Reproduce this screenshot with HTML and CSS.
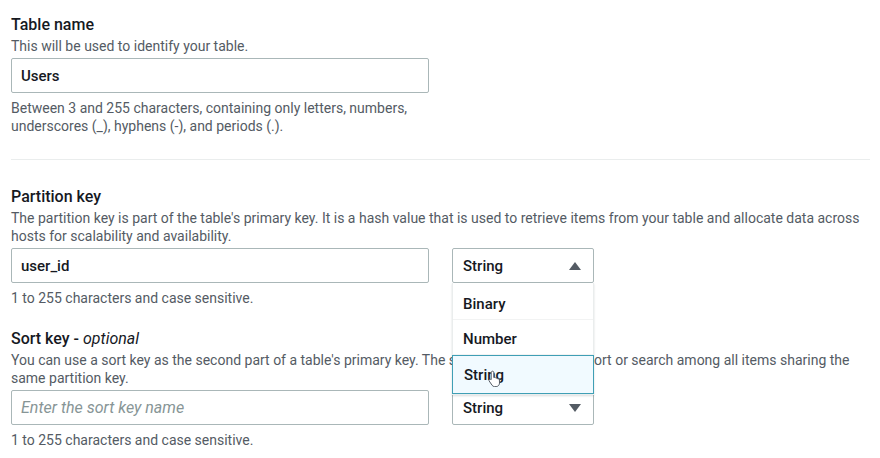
FILE: index.html
```html
<!DOCTYPE html>
<html lang="en">
<head>
<meta charset="utf-8">
<title>Table details</title>
<link rel="stylesheet" href="styles.css">
</head>
<body>
<div class="form">
  <section class="field">
    <div class="label">Table name</div>
    <div class="desc">This will be used to identify your table.</div>
    <div class="row">
      <div class="input value">Users</div>
    </div>
    <div class="help">Between 3 and 255 characters, containing only letters, numbers,<br>underscores (_), hyphens (-), and periods (.).</div>
  </section>

  <hr class="divider">

  <section class="field">
    <div class="label">Partition key</div>
    <div class="desc">The partition key is part of the table's primary key. It is a hash value that is used to retrieve items from your table and allocate data across hosts for scalability and availability.</div>
    <div class="row">
      <div class="input value">user_id</div>
      <div class="select-wrap">
        <div class="select open">
          <span>String</span>
          <svg class="caret" width="12" height="8" viewBox="0 0 12 8"><path d="M6 0 L12 8 L0 8 Z" fill="#545b64"/></svg>
        </div>
        <ul class="menu">
          <li class="opt">Binary</li>
          <li class="opt">Number</li>
          <li class="opt active">String
            <svg class="cursor" width="14" height="17" viewBox="0 0 14 17"><path d="M4.5 1.2c.8 0 1.3.6 1.3 1.3v5l.4-.1c.8-.2 1.5.2 1.7.8.7-.3 1.5 0 1.8.7.7-.2 1.5.2 1.7 1l.1 3.2c0 1.6-1.3 3.5-3.3 3.5H6.5c-1 0-1.8-.5-2.4-1.3L1.2 11c-.4-.6-.2-1.3.4-1.6.5-.3 1.1-.2 1.5.2l.1.1V2.5c0-.7.6-1.3 1.3-1.3z" fill="#fff" stroke="#545b64" stroke-width="1"/></svg>
          </li>
        </ul>
      </div>
    </div>
    <div class="help">1 to 255 characters and case sensitive.</div>
  </section>

  <section class="field sort">
    <div class="label">Sort key - <em>optional</em></div>
    <div class="desc">You can use a sort key as the second part of a table's primary key. The sort key allows you to sort or search among all items sharing the same partition key.</div>
    <div class="row">
      <div class="input placeholder">Enter the sort key name</div>
      <div class="select-wrap">
        <div class="select">
          <span>String</span>
          <svg class="caret" width="12" height="8" viewBox="0 0 12 8"><path d="M0 0 L12 0 L6 8 Z" fill="#545b64"/></svg>
        </div>
      </div>
    </div>
    <div class="help">1 to 255 characters and case sensitive.</div>
  </section>
</div>
</body>
</html>
```

FILE: styles.css
```css
html, body {
  margin: 0;
  padding: 0;
  background: #ffffff;
}

body {
  font-family: Roboto, "Liberation Sans", sans-serif;
  color: #16191f;
}

.form {
  padding: 14px 10px 0 11px;
  display: flex;
  flex-direction: column;
}

.field {
  display: flex;
  flex-direction: column;
}

.label {
  font-size: 16px;
  line-height: 22px;
  font-weight: 500;
  color: #16191f;
}

.label em {
  font-weight: 400;
  font-style: italic;
}

.desc {
  margin-top: 1px;
  font-size: 14px;
  line-height: 18px;
  color: #545b64;
}

.row {
  margin-top: 3px;
  display: flex;
  gap: 23px;
  align-items: flex-start;
}

.input {
  box-sizing: border-box;
  width: 418px;
  height: 35px;
  border: 1px solid #aab7b8;
  border-radius: 2px;
  padding: 0 9px;
  display: flex;
  align-items: center;
  font-size: 15px;
}

.input.value {
  font-weight: 500;
  color: #16191f;
}

.input.placeholder {
  font-size: 16px;
  font-style: italic;
  color: #879596;
}

.help {
  margin-top: 6px;
  font-size: 14px;
  line-height: 18px;
  color: #545b64;
}

.divider {
  margin: 24px 0 26px 0;
  border: 0;
  border-top: 1px solid #eaeded;
  height: 0;
}

.sort {
  margin-top: 21px;
}

.select-wrap {
  position: relative;
  width: 142px;
}

.select {
  box-sizing: border-box;
  height: 35px;
  border: 1px solid #aab7b8;
  border-radius: 2px;
  padding: 0 12px 0 10px;
  display: flex;
  align-items: center;
  justify-content: space-between;
  font-size: 15px;
  font-weight: 500;
  color: #16191f;
  background: #fff;
}

.menu {
  position: absolute;
  top: 100%;
  left: 0;
  right: 0;
  z-index: 5;
  margin: 0;
  padding: 2px 0 0 0;
  list-style: none;
  background: #fff;
  border: 1px solid #eaeded;
  border-top: 0;
  box-shadow: 0 1px 2px rgba(0, 28, 36, 0.15);
}

.opt {
  position: relative;
  box-sizing: border-box;
  height: 35px;
  padding: 3px 10px 0 10px;
  display: flex;
  align-items: center;
  font-size: 15px;
  font-weight: 500;
  color: #16191f;
  border-bottom: 1px solid #f2f3f3;
}

.opt.active {
  height: 39px;
  margin: 0 -1px;
  padding: 1px 11px 0 11px;
  background: #f1faff;
  border: 1px solid #3f9fb5;
}

.cursor {
  position: absolute;
  left: 35px;
  top: 14px;
}
```
